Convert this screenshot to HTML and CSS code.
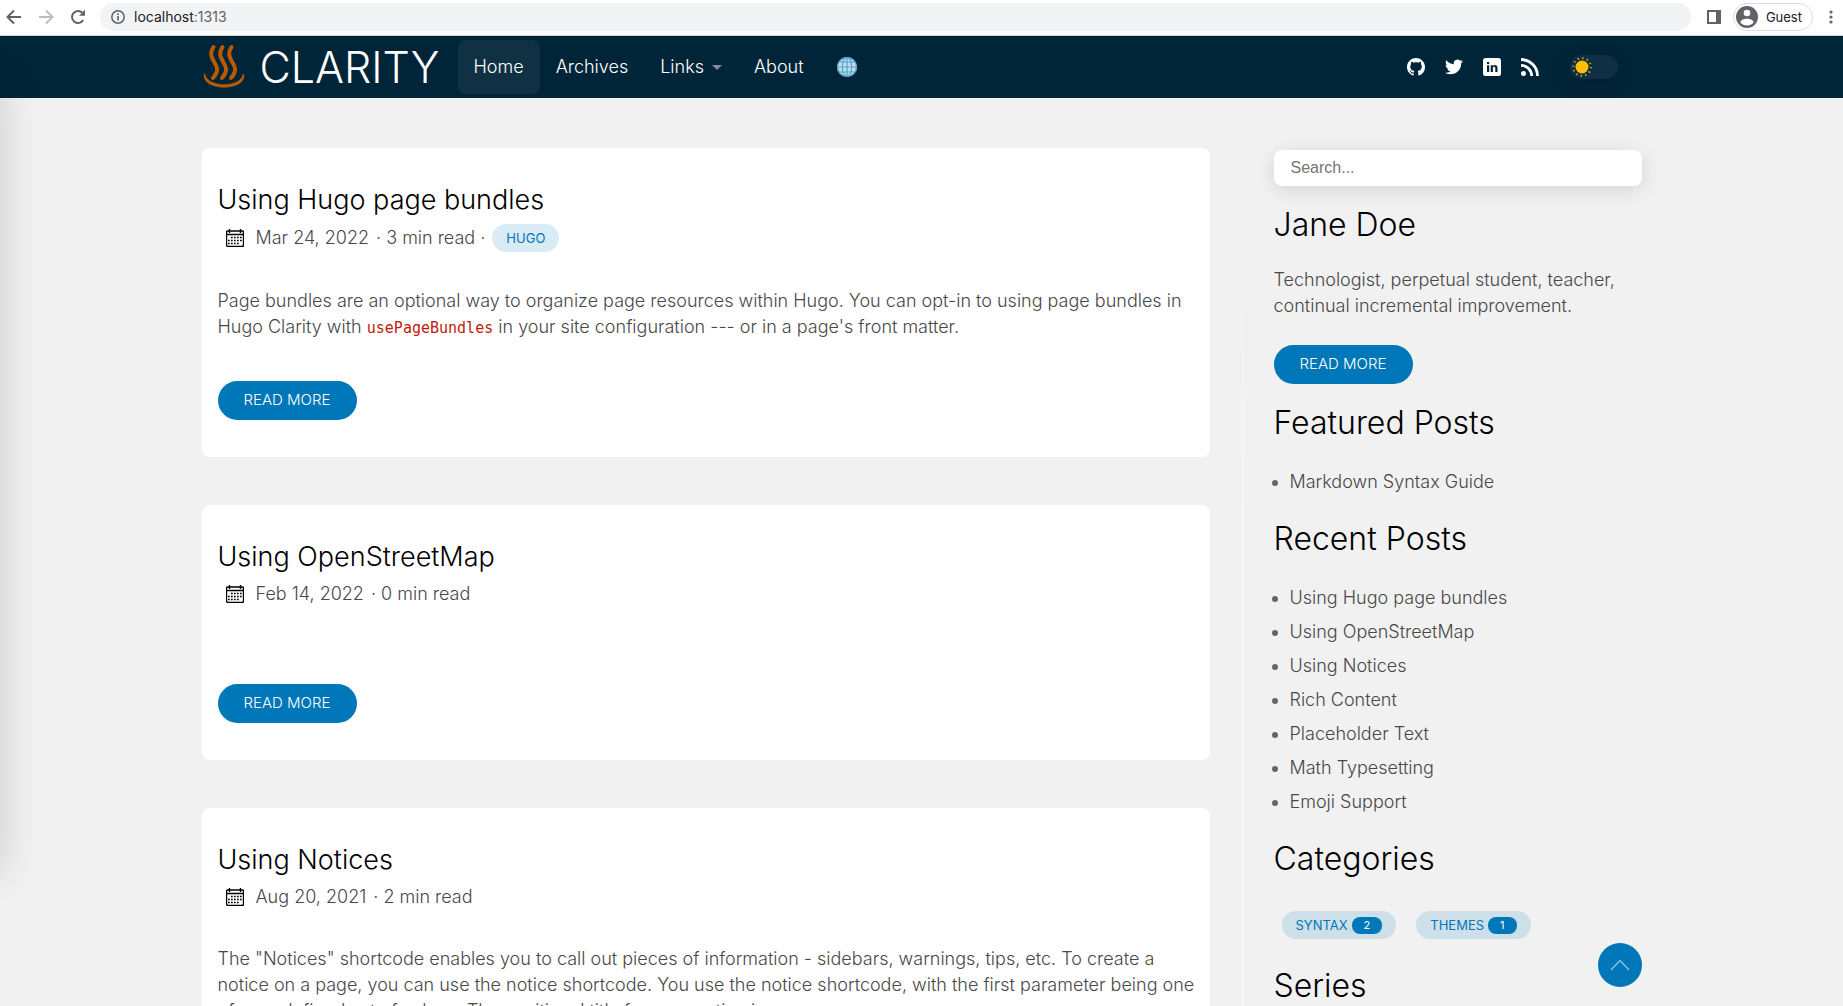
FILE: index.html
```html
<!DOCTYPE html>
<html lang="en">
<head>
<meta charset="utf-8">
<meta name="viewport" content="width=device-width, initial-scale=1">
<title>Clarity</title>
<link rel="stylesheet" href="styles.css">
</head>
<body>
<div class="browser">
  <button class="tool" aria-label="Back"><svg width="16" height="16" viewBox="0 0 16 16" fill="none" stroke="#5f6368" stroke-width="2"><path d="M15 8H2M8 1.500L1.500 8L8 14.500"/></svg></button>
  <button class="tool" aria-label="Forward"><svg width="16" height="16" viewBox="0 0 16 16" fill="none" stroke="#babcbe" stroke-width="2"><path d="M1 8h13M8 1.500L14.500 8L8 14.500"/></svg></button>
  <button class="tool" aria-label="Reload"><svg width="16" height="16" viewBox="0 0 16 16"><path d="M13.200 11A6 6 0 1 1 12.300 3.800" fill="none" stroke="#5f6368" stroke-width="2"/><path d="M15 .8v6H9z" fill="#5f6368"/></svg></button>
  <div class="address">
    <svg width="14" height="14" viewBox="0 0 14 14"><circle cx="7" cy="7" r="6.200" fill="none" stroke="#5f6368" stroke-width="1.500"/><path d="M6.200 6h1.600v4.500H6.200zM6.200 3.300h1.600v1.600H6.200z" fill="#5f6368"/></svg>
    <span>localhost<span class="port">:1313</span></span>
  </div>
  <button class="tool" aria-label="Side panel"><svg width="14" height="14" viewBox="0 0 14 14"><path d="M0 0h14v14H0zM2 2v10h7V2z" fill="#5f6368" fill-rule="evenodd"/></svg></button>
  <button class="guest"><svg width="22" height="22" viewBox="0 0 22 22"><circle cx="11" cy="11" r="11" fill="#5f6368"/><circle cx="11" cy="7" r="3.300" fill="#fff"/><path d="M4.300 16.500c1-3 4-3.700 6.700-3.700s5.700.7 6.700 3.700c-3.500 4-9.900 4-13.400 0z" fill="#fff"/></svg>Guest</button>
  <button class="tool" aria-label="Menu"><svg width="4" height="14" viewBox="0 0 4 14" fill="#5f6368"><circle cx="2" cy="2" r="1.600"/><circle cx="2" cy="7" r="1.600"/><circle cx="2" cy="12" r="1.600"/></svg></button>
</div>

<div class="drawer"></div>

<header class="header">
  <div class="wrap bar">
    <a class="brand" href="#">
      <svg width="44" height="46" viewBox="0 0 44 46" fill="none" stroke="#ba5a00" stroke-linecap="round"><path d="M2.500 30C-1.500 47.500 45.500 47.500 41.500 30C38.500 44.500 5.500 44.500 2.500 30z" fill="#ba5a00" stroke-width="1"/><path d="M11.500 3C2.500 17 23.500 20 11 34M20.500 3C11.500 17 32.500 20 20 34M29.500 3C20.500 17 41.500 20 29 34" stroke-width="4"/></svg>
      <span>CLARITY</span>
    </a>
    <nav class="menu">
      <a class="active" href="#">Home</a>
      <a href="#">Archives</a>
      <a href="#">Links <i class="caret"></i></a>
      <a href="#">About</a>
      <a href="#" aria-label="Language"><svg width="22" height="22" viewBox="0 0 22 22"><circle cx="11" cy="11" r="10" fill="#c9dce6"/><g fill="none" stroke="#4aa9cf" stroke-width="1.200"><circle cx="11" cy="11" r="9.400"/><ellipse cx="11" cy="11" rx="4.700" ry="9.400"/><path d="M11 1.500v19M1.500 11h19M3.300 6h15.400M3.300 16h15.400"/></g></svg></a>
    </nav>
    <div class="social">
      <a href="#" aria-label="GitHub"><svg width="18" height="18" viewBox="0 0 16 16" fill="#fff"><path d="M8 0C3.580 0 0 3.580 0 8c0 3.540 2.290 6.530 5.470 7.590.4.070.55-.17.55-.38v-1.490c-2.010.37-2.530-.49-2.690-.94-.09-.23-.48-.94-.82-1.130-.28-.15-.68-.52-.01-.53.63-.01 1.080.58 1.230.82.72 1.210 1.870.87 2.330.66.07-.52.28-.87.51-1.070-1.780-.2-3.640-.89-3.640-3.950 0-.87.31-1.590.82-2.150-.08-.2-.36-1.020.08-2.120 0 0 .67-.21 2.200.82.640-.18 1.320-.27 2-.27s1.360.09 2 .27c1.530-1.040 2.200-.82 2.200-.82.44 1.100.16 1.920.08 2.120.51.56.82 1.270.82 2.150 0 3.070-1.870 3.750-3.650 3.950.29.25.54.73.54 1.480v2.200c0 .21.15.46.55.38A8.010 8.010 0 0 0 16 8c0-4.420-3.580-8-8-8z"/></svg></a>
      <a href="#" aria-label="Twitter"><svg width="18" height="18" viewBox="0 0 24 24" fill="#fff"><path d="M23.950 4.570a10 10 0 0 1-2.820.77 4.960 4.960 0 0 0 2.160-2.720c-.95.55-2 .96-3.130 1.180a4.920 4.920 0 0 0-8.380 4.480C7.690 8.090 4.070 6.130 1.640 3.160a4.820 4.820 0 0 0-.67 2.480c0 1.710.87 3.210 2.190 4.100a4.900 4.900 0 0 1-2.230-.62v.06a4.920 4.920 0 0 0 3.950 4.830 5 5 0 0 1-2.210.08 4.940 4.940 0 0 0 4.600 3.420A9.870 9.870 0 0 1 0 19.540a13.990 13.990 0 0 0 7.560 2.210c9.050 0 14-7.500 14-13.980 0-.21 0-.42-.02-.63a9.940 9.940 0 0 0 2.410-2.570z"/></svg></a>
      <a href="#" aria-label="LinkedIn"><svg width="18" height="18" viewBox="0 0 18 18"><rect width="18" height="18" rx="2.500" fill="#fff"/><path d="M4 7.200h2.200V14H4zM4 4h2.200v2.100H4zM7.700 7.200h2.100v1c1.200-1.900 4.700-1.600 4.700 1.500V14h-2.200v-3.800c0-1.900-2.400-1.700-2.400 0V14H7.700z" fill="#002538"/></svg></a>
      <a href="#" aria-label="RSS"><svg width="18" height="18" viewBox="0 0 18 18" fill="none" stroke="#fff" stroke-width="2.800"><circle cx="2.500" cy="15.500" r="2.500" fill="#fff" stroke="none"/><path d="M0 7.300A10.700 10.700 0 0 1 10.700 18M0 1.500A16.500 16.500 0 0 1 16.500 18"/></svg></a>
    </div>
    <button class="mode" aria-label="Toggle dark mode"><svg width="20" height="20" viewBox="0 0 20 20"><circle cx="10" cy="10" r="8.800" fill="none" stroke="#cda21c" stroke-width="2.200" stroke-dasharray="1.300 3.307"/><circle cx="10" cy="10" r="7.200" fill="#002538"/><circle cx="10" cy="10" r="6.500" fill="#ffc107"/></svg></button>
  </div>
</header>

<main class="wrap page">
  <section class="posts">
    <article class="card">
      <h2><a href="#">Using Hugo page bundles</a></h2>
      <div class="meta"><svg class="calendar" width="18" height="18" viewBox="0 0 18 18"><use href="#cal"/></svg><span class="date">Mar 24, 2022</span><span>· 3 min read ·</span><a class="pill" href="#">HUGO</a></div>
      <p class="excerpt">Page bundles are an optional way to organize page resources within Hugo. You can opt-in to using page bundles in Hugo Clarity with <code>usePageBundles</code> in your site configuration --- or in a page's front matter.</p>
      <a class="button" href="#">READ MORE</a>
    </article>
    <article class="card">
      <h2><a href="#">Using OpenStreetMap</a></h2>
      <div class="meta"><svg class="calendar" width="18" height="18" viewBox="0 0 18 18"><use href="#cal"/></svg><span class="date">Feb 14, 2022</span><span>· 0 min read</span></div>
      <p class="excerpt"></p>
      <a class="button" href="#">READ MORE</a>
    </article>
    <article class="card">
      <h2><a href="#">Using Notices</a></h2>
      <div class="meta"><svg class="calendar" width="18" height="18" viewBox="0 0 18 18"><use href="#cal"/></svg><span class="date">Aug 20, 2021</span><span>· 2 min read</span></div>
      <p class="excerpt">The "Notices" shortcode enables you to call out pieces of information - sidebars, warnings, tips, etc. To create a notice on a page, you can use the notice shortcode. You use the notice shortcode, with the first parameter being one of a predefined set of values. The positional title for your notice is</p>
      <a class="button" href="#">READ MORE</a>
    </article>
  </section>

  <aside class="side">
    <input class="search" type="search" placeholder="Search..." aria-label="Search">
    <h2>Jane Doe</h2>
    <p>Technologist, perpetual student, teacher, continual incremental improvement.</p>
    <a class="button" href="#">READ MORE</a>
    <h2>Featured Posts</h2>
    <ul>
      <li><a href="#">Markdown Syntax Guide</a></li>
    </ul>
    <h2>Recent Posts</h2>
    <ul>
      <li><a href="#">Using Hugo page bundles</a></li>
      <li><a href="#">Using OpenStreetMap</a></li>
      <li><a href="#">Using Notices</a></li>
      <li><a href="#">Rich Content</a></li>
      <li><a href="#">Placeholder Text</a></li>
      <li><a href="#">Math Typesetting</a></li>
      <li><a href="#">Emoji Support</a></li>
    </ul>
    <h2>Categories</h2>
    <div class="tags">
      <a class="pill" href="#">SYNTAX <span class="count">2</span></a>
      <a class="pill" href="#">THEMES <span class="count">1</span></a>
    </div>
    <h2>Series</h2>
  </aside>
</main>

<div class="wrap top-anchor"><a class="to-top" href="#" aria-label="Back to top"><svg width="20" height="12" viewBox="0 0 20 12" fill="none" stroke="#8cc4e4" stroke-width="1.300"><path d="M1 11L10 1.500L19 11"/></svg></a></div>

<svg class="sprite" aria-hidden="true"><symbol id="cal" viewBox="0 0 18 18"><path d="M1.500 2h15a1 1 0 0 1 1 1v13a1.500 1.500 0 0 1-1.500 1.500H2A1.500 1.500 0 0 1 .5 16V3a1 1 0 0 1 1-1zM.5 5.500h17" fill="none" stroke="#000" stroke-width="1.400"/><path d="M3.500 0v4M14.500 0v4" stroke="#000" stroke-width="1.400"/><path d="M5 8.500h11M2 11.500h14M2 14.500h11" stroke="#000" stroke-width="1.600" stroke-dasharray="1.700 1.300"/></symbol></svg>
</body>
</html>
```
FILE: styles.css
```css
* { box-sizing: border-box; }

body {
  margin: 0;
  height: 100vh;
  overflow: hidden;
  background: #f1f1f1;
  color: #484848;
  font: 300 18px/26px Inter, "Open Sans", sans-serif;
}

a { color: inherit; text-decoration: none; }
button { font: inherit; border: 0; padding: 0; background: none; }
svg { display: block; flex: none; }

h2 { margin: 0; color: #000; font-weight: 300; }

.sprite { position: absolute; width: 0; height: 0; }

.wrap { width: 100%; max-width: 1440px; margin: 0 auto; }

/* Browser toolbar */
.browser {
  display: flex;
  align-items: center;
  height: 36px;
  padding: 0 10px 2px 6px;
  gap: 16px;
  background: #fff;
  border-bottom: 1px solid #d5d7da;
}
.tool { display: flex; }
.address {
  display: flex;
  flex: 1;
  align-items: center;
  gap: 9px;
  height: 28px;
  margin-left: -2px;
  padding: 0 11px;
  border-radius: 14px;
  background: #f1f3f4;
  color: #202124;
  font: 14px/28px Inter, sans-serif;
}
.port { color: #5f6368; }
.guest {
  display: flex;
  align-items: center;
  gap: 8px;
  height: 28px;
  margin-left: -4px;
  padding: 0 10px 0 2px;
  border: 1px solid #dadce0;
  border-radius: 14px;
  color: #202124;
  font: 400 13px/26px Inter, sans-serif;
}

/* Off-canvas drawer: only its shadow shows at the window edge */
.drawer {
  position: absolute;
  z-index: 2;
  top: 84px;
  left: -300px;
  width: 300px;
  height: 790px;
  box-shadow: 0 0 40px rgba(0, 0, 0, .16);
}

/* Site header */
.header { background: #002538; color: #fff; }
.bar { display: flex; align-items: center; height: 62px; }
.brand { display: flex; align-items: center; gap: 14px; width: 256px; }
.brand span { font: 300 43px/60px Inter, sans-serif; }
.menu { display: flex; flex: 1; }
.menu a {
  display: flex;
  align-items: center;
  gap: 8px;
  height: 54px;
  padding: 0 16px;
  border-radius: 8px;
}
.menu .active { background: rgba(255, 255, 255, .06); }
.caret { border: 5px solid transparent; border-top-color: #7d8d97; border-bottom: 0; }
.social { display: flex; gap: 20px; margin-right: 31px; }
.mode {
  display: flex;
  align-items: center;
  width: 48px;
  height: 24px;
  margin-right: 24px;
  padding-left: 2px;
  border-radius: 12px;
  background: #0f3042;
  box-shadow: 0 5px 20px rgba(0, 0, 0, .12);
}

/* Page */
.page { display: grid; grid-template-columns: 7fr 3fr; padding-top: 50px; }
.posts { display: grid; gap: 48px; align-content: start; }

.card {
  display: flex;
  flex-direction: column;
  padding: 32px 4px 37px 16px;
  border-radius: 8px;
  background: #fff;
}
.card h2 { font-size: 27px; line-height: 40px; }
.meta {
  display: flex;
  align-items: center;
  gap: 7px;
  min-height: 25px;
  margin-top: 4px;
  padding-left: 8px;
}
.date { margin-left: 5px; }
.excerpt { margin: 36px 0 41px; }
.excerpt code { color: #c21a0c; font: 15px/20px "DejaVu Sans Mono", monospace; }

.button {
  display: block;
  width: 139px;
  height: 39px;
  border-radius: 20px;
  background: #0077b8;
  color: #fff;
  font-size: 15px;
  line-height: 37px;
  text-align: center;
}

.pill {
  display: flex;
  align-items: center;
  gap: 4px;
  height: 28px;
  padding: 0 14px;
  border-radius: 14px;
  background: rgba(0, 119, 184, .15);
  color: #0077b8;
  font-size: 13px;
  font-weight: 400;
}
.count {
  padding: 0 12px;
  border-radius: 8px;
  background: #0077b8;
  color: #fff;
  font-size: 11px;
  line-height: 17px;
}

/* Sidebar */
.side {
  margin-left: 32px;
  padding: 2px 0 0 31px;
  border-left: 1px solid;
  border-image: linear-gradient(transparent 60px, #fafafa 400px) 1;
}
.search {
  display: block;
  width: 100%;
  height: 36px;
  margin-bottom: 19px;
  padding: 0 17px;
  border: 0;
  border-radius: 8px;
  background: #fff;
  box-shadow: 0 4px 20px rgba(0, 0, 0, .12);
  font: 16px/36px "Liberation Sans", Arial, sans-serif;
}
.search::placeholder { color: #757575; }
.side h2 { font-size: 32px; line-height: 40px; }
.side p { margin: 22px 0 26px; }
.side .button { margin-bottom: 19px; }
.side ul {
  display: grid;
  gap: 8px;
  margin: 26px 0 24px;
  padding-left: 16px;
}
.side li::marker { color: #666; }
.tags { display: flex; gap: 20px; margin: 32px 8px 27px; }

.top-anchor { position: fixed; right: 0; bottom: 19px; left: 0; display: flex; justify-content: flex-end; }
.to-top {
  display: flex;
  align-items: center;
  justify-content: center;
  width: 44px;
  height: 44px;
  border-radius: 50%;
  background: #0077b8;
}
```
